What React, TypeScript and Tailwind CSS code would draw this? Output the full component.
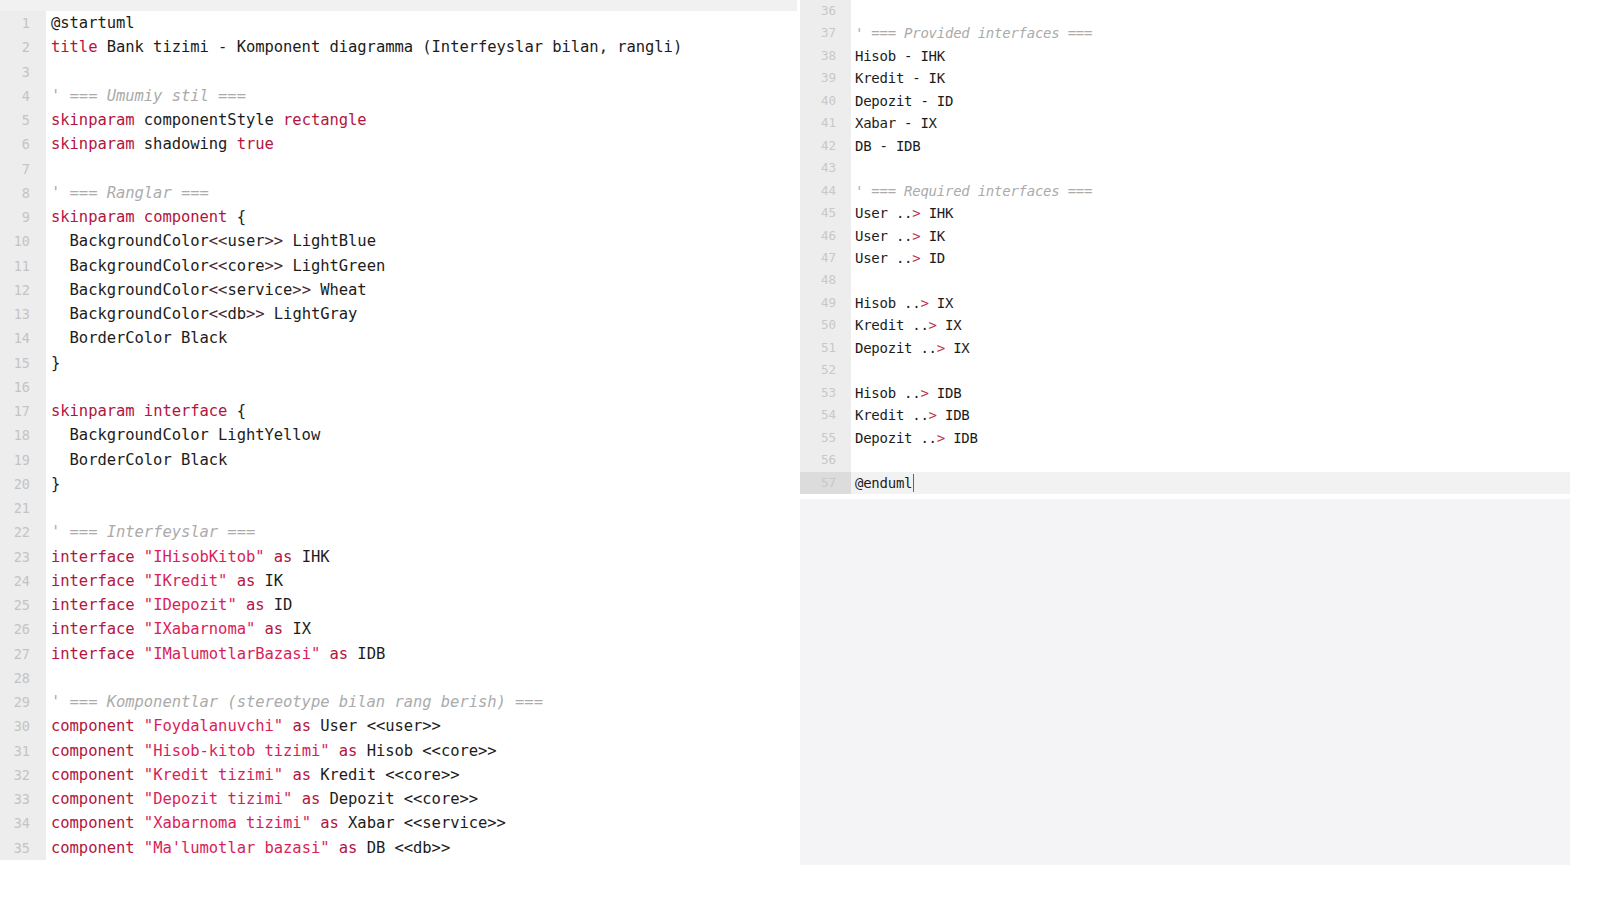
import React from "react";

type Seg = [string, string];

const K = "k";
const S = "s";
const C = "c";
const T = "t";
const A = "a";
const R = "r";

const leftLines: Seg[][] = [
  [[T, "@startuml"]],
  [[K, "title"], [T, " Bank tizimi - Komponent diagramma (Interfeyslar bilan, rangli)"]],
  [],
  [[C, "' === Umumiy stil ==="]],
  [[K, "skinparam"], [T, " componentStyle "], [K, "rectangle"]],
  [[K, "skinparam"], [T, " shadowing "], [K, "true"]],
  [],
  [[C, "' === Ranglar ==="]],
  [[K, "skinparam"], [T, " "], [K, "component"], [T, " {"]],
  [[T, "  BackgroundColor"], [A, "<<"], [T, "user"], [A, ">>"], [T, " LightBlue"]],
  [[T, "  BackgroundColor"], [A, "<<"], [T, "core"], [A, ">>"], [T, " LightGreen"]],
  [[T, "  BackgroundColor"], [A, "<<"], [T, "service"], [A, ">>"], [T, " Wheat"]],
  [[T, "  BackgroundColor"], [A, "<<"], [T, "db"], [A, ">>"], [T, " LightGray"]],
  [[T, "  BorderColor Black"]],
  [[T, "}"]],
  [],
  [[K, "skinparam"], [T, " "], [K, "interface"], [T, " {"]],
  [[T, "  BackgroundColor LightYellow"]],
  [[T, "  BorderColor Black"]],
  [[T, "}"]],
  [],
  [[C, "' === Interfeyslar ==="]],
  [[K, "interface"], [T, " "], [S, '"IHisobKitob"'], [T, " "], [K, "as"], [T, " IHK"]],
  [[K, "interface"], [T, " "], [S, '"IKredit"'], [T, " "], [K, "as"], [T, " IK"]],
  [[K, "interface"], [T, " "], [S, '"IDepozit"'], [T, " "], [K, "as"], [T, " ID"]],
  [[K, "interface"], [T, " "], [S, '"IXabarnoma"'], [T, " "], [K, "as"], [T, " IX"]],
  [[K, "interface"], [T, " "], [S, '"IMalumotlarBazasi"'], [T, " "], [K, "as"], [T, " IDB"]],
  [],
  [[C, "' === Komponentlar (stereotype bilan rang berish) ==="]],
  [[K, "component"], [T, " "], [S, '"Foydalanuvchi"'], [T, " "], [K, "as"], [T, " User <<user>>"]],
  [[K, "component"], [T, " "], [S, '"Hisob-kitob tizimi"'], [T, " "], [K, "as"], [T, " Hisob <<core>>"]],
  [[K, "component"], [T, " "], [S, '"Kredit tizimi"'], [T, " "], [K, "as"], [T, " Kredit <<core>>"]],
  [[K, "component"], [T, " "], [S, '"Depozit tizimi"'], [T, " "], [K, "as"], [T, " Depozit <<core>>"]],
  [[K, "component"], [T, " "], [S, '"Xabarnoma tizimi"'], [T, " "], [K, "as"], [T, " Xabar <<service>>"]],
  [[K, "component"], [T, " "], [S, '"Ma\'lumotlar bazasi"'], [T, " "], [K, "as"], [T, " DB <<db>>"]],
];

const dep = (a: string, b: string): Seg[] => [[T, a + " .."], [R, ">"], [T, " " + b]];

const rightLines: Seg[][] = [
  [],
  [[C, "' === Provided interfaces ==="]],
  [[T, "Hisob - IHK"]],
  [[T, "Kredit - IK"]],
  [[T, "Depozit - ID"]],
  [[T, "Xabar - IX"]],
  [[T, "DB - IDB"]],
  [],
  [[C, "' === Required interfaces ==="]],
  dep("User", "IHK"),
  dep("User", "IK"),
  dep("User", "ID"),
  [],
  dep("Hisob", "IX"),
  dep("Kredit", "IX"),
  dep("Depozit", "IX"),
  [],
  dep("Hisob", "IDB"),
  dep("Kredit", "IDB"),
  dep("Depozit", "IDB"),
  [],
  [[T, "@enduml"]],
];

function Segment({ seg }: { seg: Seg }) {
  const [type, text] = seg;
  if (type === K) return <span className="text-[#b3153f]">{text}</span>;
  if (type === S) return <span className="text-[#d81e5b]">{text}</span>;
  if (type === C) return <span className="italic text-[#ababab]">{text}</span>;
  if (type === A) return <span className="text-[#4a2a36]">{text}</span>;
  if (type === R) return <span className="text-[#b8324a]">{text}</span>;
  return <span className="text-[#1c1c1c]">{text}</span>;
}

const mono = { fontFamily: '"DejaVu Sans Mono", "Liberation Mono", monospace' };

export default function App() {
  return (
    <div className="w-[1600px] h-[899px] bg-white flex overflow-hidden" style={mono}>
      {/* left editor */}
      <div className="w-[797px] flex flex-col">
        <div className="h-[11px] bg-[#f1f1f1]" />
        <div className="flex pb-[3px]">
          <div className="w-[46px] bg-[#ededed] flex flex-col">
            {leftLines.map((_, i) => (
              <div
                key={i}
                className="h-[24.25px] leading-[24.25px] text-right pr-[16px] text-[13.5px] text-[#c4c4c4]"
              >
                {i + 1}
              </div>
            ))}
          </div>
          <div className="flex-1 pl-[5px] flex flex-col">
            {leftLines.map((line, i) => (
              <div
                key={i}
                className="h-[24.25px] leading-[24.25px] text-[15.5px] tracking-[-0.05px] whitespace-pre"
              >
                {line.map((seg, j) => (
                  <Segment key={j} seg={seg} />
                ))}
              </div>
            ))}
          </div>
        </div>
      </div>

      {/* right editor */}
      <div className="w-[770px] ml-[3px] flex flex-col">
        <div className="flex flex-col">
          {rightLines.map((line, i) => {
            const current = i === rightLines.length - 1;
            return (
              <div key={i} className={`flex h-[22.46px] ${current ? "bg-[#f2f2f2]" : ""}`}>
                <div
                  className={`w-[51px] shrink-0 text-right pr-[15px] text-[12.5px] leading-[22.46px] text-[#c8c8c8] ${
                    current ? "bg-[#dcdcdc]" : "bg-[#ededed]"
                  }`}
                >
                  {i + 36}
                </div>
                <div className="pl-[4px] flex items-center text-[14px] tracking-[-0.25px] leading-[22.46px] whitespace-pre">
                  {line.map((seg, j) => (
                    <Segment key={j} seg={seg} />
                  ))}
                  {current && <span className="w-px h-[18px] bg-[#666] ml-[1px]" />}
                </div>
              </div>
            );
          })}
        </div>
        <div className="mt-[5px] h-[366px] bg-[#f4f4f6]" />
      </div>
    </div>
  );
}
